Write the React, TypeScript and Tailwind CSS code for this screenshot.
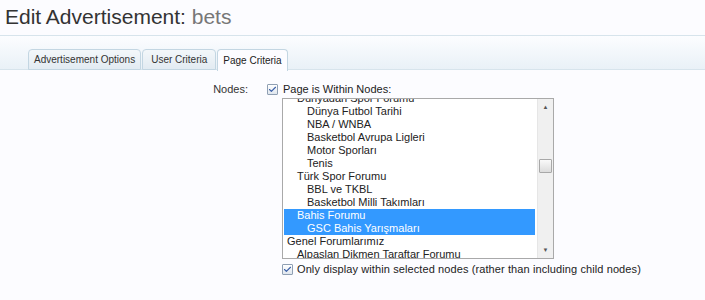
import { Check } from "lucide-react";

const NODES = [
  { name: "Dünyadan Spor Forumu", level: 2 },
  { name: "Dünya Futbol Tarihi", level: 3 },
  { name: "NBA / WNBA", level: 3 },
  { name: "Basketbol Avrupa Ligleri", level: 3 },
  { name: "Motor Sporları", level: 3 },
  { name: "Tenis", level: 3 },
  { name: "Türk Spor Forumu", level: 2 },
  { name: "BBL ve TKBL", level: 3 },
  { name: "Basketbol Milli Takımları", level: 3 },
  { name: "Bahis Forumu", level: 2, selected: true },
  { name: "GSC Bahis Yarışmaları", level: 3, selected: true },
  { name: "Genel Forumlarımız", level: 1 },
  { name: "Alpaslan Dikmen Taraftar Forumu", level: 2 },
];

const indent: Record<number, string> = {
  1: "pl-[3px]",
  2: "pl-[13px]",
  3: "pl-[23px]",
};

function CheckBox() {
  return (
    <span className="flex h-[11px] w-[11px] items-center justify-center rounded-[1px] border border-[#8f9fb3] bg-gradient-to-b from-[#ffffff] to-[#dfe6ee]">
      <Check size={9} strokeWidth={3} className="text-[#3a5fa8]" />
    </span>
  );
}

const tabs = [
  { label: "Advertisement Options", pad: "px-[5px]" },
  { label: "User Criteria", pad: "px-[8px]" },
  { label: "Page Criteria", pad: "px-[5px]", active: true },
];

export default function App() {
  return (
    <div className="h-[300px] w-[705px] overflow-hidden bg-[#fcfcff] font-['Liberation_Sans',sans-serif] text-[11px] text-[#222]">
      <h1 className="h-[35px] pl-[5px] pt-[5px] text-[21px] leading-[24px] text-[#333]">
        Edit Advertisement: <span className="text-[#777]">bets</span>
      </h1>
      <div className="h-[35px] border-y border-[#d7e4ec] bg-gradient-to-b from-[#fcfdff] to-[#e9f1f7] pl-[28px] pt-[13px]">
        <div className="flex h-[21px] items-stretch gap-[1px] text-[10px]">
          {tabs.map((t) => (
            <div
              key={t.label}
              className={`${t.pad} ${
                t.active
                  ? "-mb-px flex items-center rounded-t-[4px] border border-b-0 border-[#c3d6e2] bg-[#fcfcff] text-[#222]"
                  : "flex items-center rounded-t-[4px] border border-[#c3d6e2] bg-gradient-to-b from-[#f3f7fa] to-[#e2ebf2] text-[#333]"
              }`}
            >
              {t.label}
            </div>
          ))}
        </div>
      </div>
      <div className="mt-[12px] flex">
        <div className="w-[254px] pr-[6px] text-right leading-[14px] text-[#333]">Nodes:</div>
        <div className="pl-[13px]">
          <label className="flex items-center gap-[5px] leading-[14px]">
            <CheckBox /> Page is Within Nodes:
          </label>
          <div className="ml-[15px] mt-[2px] flex h-[161px] w-[272px] border border-[#a9a9a9] bg-white">
            <div className="flex-1 overflow-hidden pl-[1px] pr-[2px]">
              <div className="-mt-[7px]">
                {NODES.map((n) => (
                  <div
                    key={n.name}
                    className={`h-[13px] whitespace-nowrap leading-[13px] ${indent[n.level]} ${
                      n.selected ? "bg-[#3399ff] text-white" : "text-[#222]"
                    }`}
                  >
                    {n.name}
                  </div>
                ))}
              </div>
            </div>
            <div className="flex w-[16px] flex-col items-center border-l border-[#e6e6e6] bg-[#f0f0f0]">
              <span className="mt-[4px] text-[6px] leading-[8px] text-[#555]">▲</span>
              <div className="mt-[48px] h-[14px] w-[13px] rounded-[1px] border border-[#a8a8a8] bg-gradient-to-b from-[#fafafa] to-[#dcdcdc]" />
              <div className="flex-1" />
              <span className="mb-[4px] text-[6px] leading-[8px] text-[#555]">▼</span>
            </div>
          </div>
          <label className="ml-[15px] mt-[3px] flex items-center gap-[4px] leading-[14px] tracking-[0.1px]">
            <CheckBox /> Only display within selected nodes (rather than including child nodes)
          </label>
        </div>
      </div>
      <div className="mt-[24px] h-px bg-[#d5e8ea]" />
    </div>
  );
}
